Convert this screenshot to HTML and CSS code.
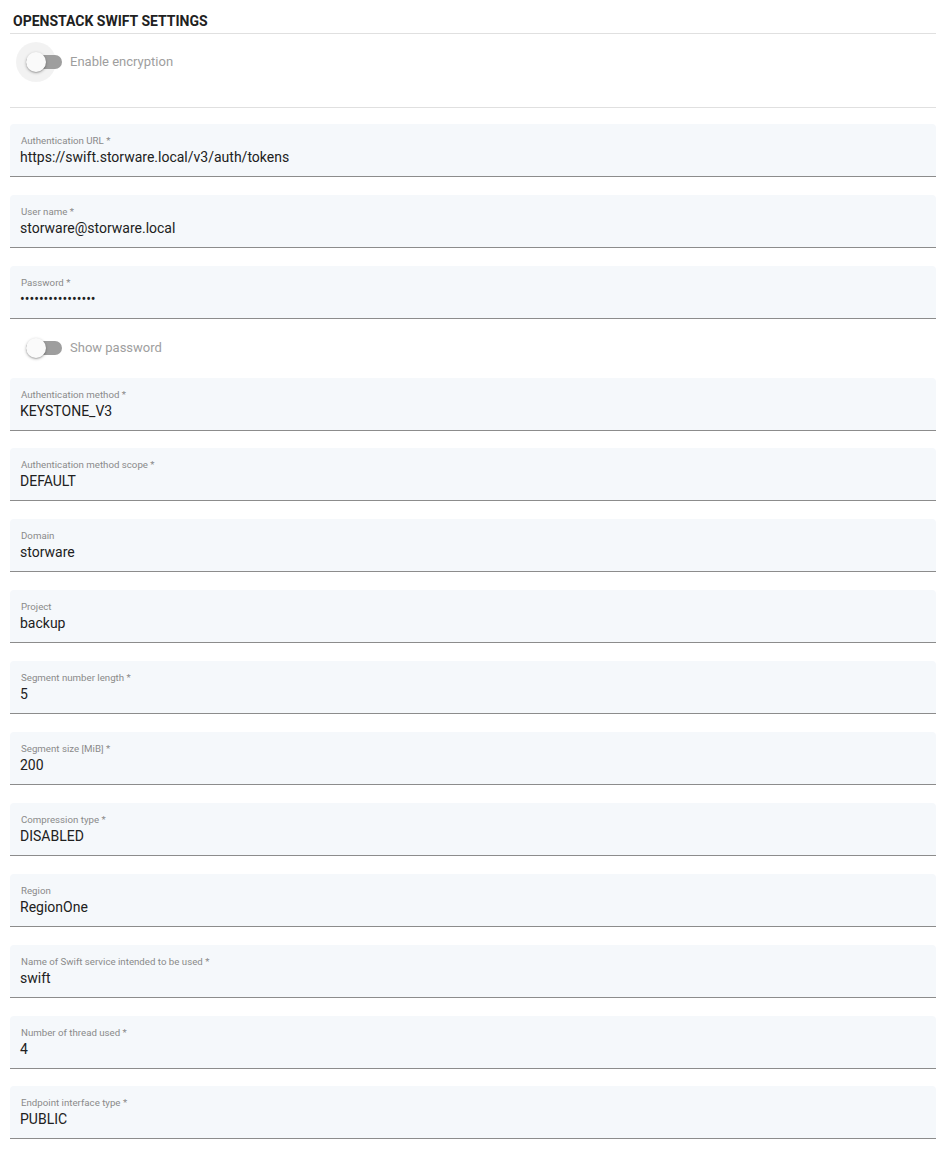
FILE: index.html
```html
<!DOCTYPE html>
<html>
<head>
<meta charset="utf-8">
<link rel="stylesheet" href="styles.css">
</head>
<body>
<div class="page">
  <h2 class="section-title">OPENSTACK SWIFT SETTINGS</h2>
  <div class="encryption">
    <div class="toggle focused"><span class="track"></span><span class="thumb"></span></div>
    <span class="toggle-label">Enable encryption</span>
  </div>
  <div class="fields">
    <div class="field"><label>Authentication URL *</label><div class="value">https://swift.storware.local/v3/auth/tokens</div></div>
    <div class="field"><label>User name *</label><div class="value">storware@storware.local</div></div>
    <div class="field"><label>Password *</label><div class="value password">••••••••••••••••</div></div>
    <div class="toggle-row">
      <div class="toggle"><span class="track"></span><span class="thumb"></span></div>
      <span class="toggle-label">Show password</span>
    </div>
    <div class="field"><label>Authentication method *</label><div class="value">KEYSTONE_V3</div></div>
    <div class="field"><label>Authentication method scope *</label><div class="value">DEFAULT</div></div>
    <div class="field"><label>Domain</label><div class="value">storware</div></div>
    <div class="field"><label>Project</label><div class="value">backup</div></div>
    <div class="field"><label>Segment number length *</label><div class="value">5</div></div>
    <div class="field"><label>Segment size [MiB] *</label><div class="value">200</div></div>
    <div class="field"><label>Compression type *</label><div class="value">DISABLED</div></div>
    <div class="field"><label>Region</label><div class="value">RegionOne</div></div>
    <div class="field"><label>Name of Swift service intended to be used *</label><div class="value">swift</div></div>
    <div class="field"><label>Number of thread used *</label><div class="value">4</div></div>
    <div class="field"><label>Endpoint interface type *</label><div class="value">PUBLIC</div></div>
  </div>
</div>
</body>
</html>
```
FILE: styles.css
```css
* { box-sizing: border-box; }
html, body { margin: 0; padding: 0; background: #fff; }
body { font-family: Roboto, "Liberation Sans", Arial, sans-serif; color: #212121; }
.page { padding-left: 10px; width: 936px; }
.section-title {
  margin: 0;
  padding: 13px 0 4px 3px;
  font-size: 14px;
  line-height: 16px;
  font-weight: 700;
  color: #212121;
  border-bottom: 1px solid #e0e0e0;
}
.encryption {
  display: flex;
  align-items: center;
  margin-top: 8px;
  height: 40px;
  padding-left: 16px;
}
.encryption .toggle-label { margin-top: -1px; }
.toggle {
  position: relative;
  width: 36px;
  height: 20px;
  flex: none;
}
.toggle .track {
  position: absolute;
  left: 0; top: 3px;
  width: 36px; height: 14px;
  border-radius: 7px;
  background: #9e9e9e;
}
.toggle .thumb {
  position: absolute;
  left: 0; top: 0;
  width: 20px; height: 20px;
  border-radius: 50%;
  background: #fafafa;
  box-shadow: 0 1px 3px rgba(0,0,0,0.3), 0 1px 1px rgba(0,0,0,0.12);
}
.toggle.focused::before {
  content: "";
  position: absolute;
  left: -10px; top: -10px;
  width: 40px; height: 40px;
  border-radius: 50%;
  background: rgba(0,0,0,0.05);
}
.toggle-label {
  margin-left: 8px;
  font-size: 13px;
  line-height: 18px;
  color: #9e9e9e;
}
.fields {
  display: flex;
  flex-direction: column;
  gap: 17.9px;
  margin-top: 25px;
  border-top: 1px solid #e0e0e0;
  padding-top: 16px;
}
.field {
  height: 53px;
  background: #f5f8fb;
  border-radius: 4px 4px 0 0;
  border-bottom: 1px solid #8c8c8c;
  padding: 10px 10px 0 10px;
}
.field label {
  display: block;
  font-size: 9.7px;
  line-height: 13px;
  color: #8a8a8a;
  padding-left: 1px;
}
.field .value {
  font-size: 14px;
  line-height: 21px;
  color: #212121;
}
.field .value.password { font-size: 14px; letter-spacing: 0; }
.toggle-row {
  display: flex;
  align-items: center;
  height: 23px;
  padding-left: 16px;
}
```
